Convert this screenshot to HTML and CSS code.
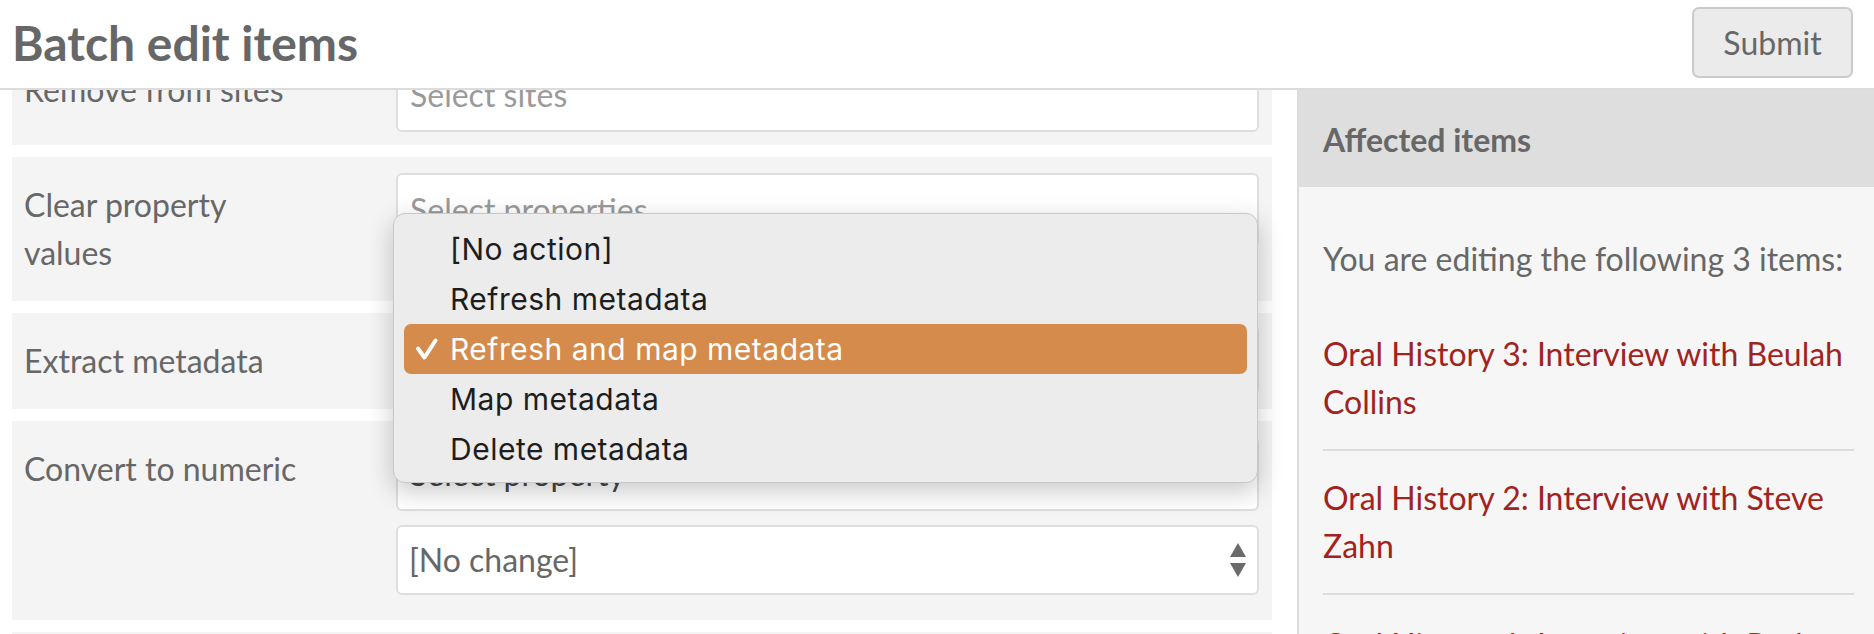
FILE: index.html
```html
<!DOCTYPE html>
<html lang="en">
<head>
<meta charset="utf-8">
<title>Batch edit items</title>
<link rel="stylesheet" href="styles.css">
</head>
<body>
<div class="page">
  <header class="page-header">
    <h1 class="page-title">Batch edit items</h1>
    <button class="btn-submit" type="button">Submit</button>
  </header>
  <div class="layout">
    <main class="main">
      <form class="batch-form">
        <div class="field">
          <div class="field-label">Remove from sites</div>
          <div class="field-inputs">
            <div class="chosen"><span class="placeholder">Select sites</span></div>
          </div>
        </div>
        <div class="field">
          <div class="field-label">Clear property values</div>
          <div class="field-inputs">
            <div class="chosen"><span class="placeholder">Select properties</span></div>
          </div>
        </div>
        <div class="field">
          <div class="field-label">Extract metadata</div>
          <div class="field-inputs">
            <div class="select">
              <span class="select-value">Refresh and map metadata</span>
              <svg class="select-arrows" viewBox="0 0 16 34" width="16" height="34" aria-hidden="true"><polygon points="8,0 16,14 0,14"/><polygon points="0,20 16,20 8,34"/></svg>
            </div>
          </div>
          <ul class="popup-menu">
            <li class="menu-item"><span class="menu-check"></span><span>[No action]</span></li>
            <li class="menu-item"><span class="menu-check"></span><span>Refresh metadata</span></li>
            <li class="menu-item is-selected"><span class="menu-check"><svg viewBox="0 0 23 22" width="23" height="22" aria-hidden="true"><path d="M3 10.5 L9.5 19.5 L20.5 2.5"/></svg></span><span>Refresh and map metadata</span></li>
            <li class="menu-item"><span class="menu-check"></span><span>Map metadata</span></li>
            <li class="menu-item"><span class="menu-check"></span><span>Delete metadata</span></li>
          </ul>
        </div>
        <div class="field">
          <div class="field-label">Convert to numeric</div>
          <div class="field-inputs">
            <div class="chosen"><span class="chosen-value">Select property</span></div>
            <div class="select">
              <span class="select-value">[No change]</span>
              <svg class="select-arrows" viewBox="0 0 16 34" width="16" height="34" aria-hidden="true"><polygon points="8,0 16,14 0,14"/><polygon points="0,20 16,20 8,34"/></svg>
            </div>
          </div>
        </div>
        <div class="field">
          <div class="field-label">Clear language</div>
          <div class="field-inputs">
            <div class="chosen"><span class="placeholder">Select properties</span></div>
          </div>
        </div>
      </form>
    </main>
    <aside class="sidebar">
      <h3 class="sidebar-title">Affected items</h3>
      <div class="sidebar-body">
        <p class="sidebar-intro">You are editing the following 3 items:</p>
        <ul class="item-list">
          <li><a href="#">Oral History 3: Interview with Beulah Collins</a></li>
          <li><a href="#">Oral History 2: Interview with Steve Zahn</a></li>
          <li><a href="#">Oral History 1: Interview with Ruth Lee</a></li>
        </ul>
      </div>
    </aside>
  </div>
</div>
</body>
</html>
```

FILE: styles.css
```css
* { box-sizing: border-box; }

html, body {
  margin: 0;
  padding: 0;
}

body {
  width: 1874px;
  height: 634px;
  overflow: hidden;
  background: #fff;
  color: #676767;
  font-family: Lato, "Open Sans", sans-serif;
  font-size: 32px;
  line-height: 48px;
}

.page {
  display: flex;
  flex-direction: column;
  height: 634px;
}

/* Header */
.page-header {
  flex: none;
  display: flex;
  justify-content: space-between;
  align-items: flex-start;
  height: 90px;
  padding: 0 21px 0 12px;
  background: #fff;
  border-bottom: 2px solid #dcdcdc;
}

.page-title {
  margin: 19px 0 0;
  font-size: 48px;
  line-height: 48px;
  font-weight: 700;
  color: #676767;
}

.btn-submit {
  margin-top: 7px;
  width: 161px;
  height: 71px;
  padding: 0;
  border: 2px solid #cacaca;
  border-radius: 7px;
  background: #ebebeb;
  color: #676767;
  font-family: Lato, "Open Sans", sans-serif;
  font-size: 32px;
  line-height: 48px;
}

/* Layout */
.layout {
  flex: 1;
  min-height: 0;
  display: grid;
  grid-template-columns: 1fr 577px;
}

.main {
  overflow: hidden;
  padding: 0 25px 0 12px;
}

.batch-form {
  margin-top: -48px;
  display: flex;
  flex-direction: column;
  gap: 12px;
}

.field {
  position: relative;
  display: grid;
  grid-template-columns: 280px 1fr;
  column-gap: 92px;
  align-items: start;
  padding: 12px 13px 12px 12px;
  background: #f4f4f4;
}

.field-label {
  padding: 12px 0;
}

.field-inputs {
  display: flex;
  flex-direction: column;
}

.chosen {
  margin: 4px 0 1px;
  height: 74px;
  padding: 11px 12px;
  background: #fff;
  border: 2px solid #dedede;
  border-radius: 6px;
  white-space: nowrap;
}

.placeholder { color: #9a9a9a; }
.chosen-value { color: #444; }

.select {
  display: flex;
  align-items: center;
  justify-content: space-between;
  height: 70px;
  padding: 0 11px;
  background: #fff;
  border: 2px solid #dedede;
  border-radius: 6px;
}

.chosen + .select {
  margin: 13px 0 13px;
}

.select-value { color: #676767; }

.select-arrows {
  flex: none;
  fill: #6b6b6b;
}

/* Native popup menu */
.popup-menu {
  position: absolute;
  left: 381px;
  top: -100px;
  z-index: 2;
  width: 865px;
  height: 270px;
  margin: 0;
  padding: 10px 0 0;
  list-style: none;
  background: #ececec;
  border: 1px solid #c8c8c8;
  border-radius: 12px;
  box-shadow: 0 8px 26px rgba(0, 0, 0, 0.22);
  font-family: Inter, "Liberation Sans", sans-serif;
  font-size: 30px;
  letter-spacing: 0.5px;
  color: #1d1d1d;
}

.menu-item {
  display: flex;
  align-items: center;
  height: 50px;
  line-height: 50px;
  margin: 0 10px;
  border-radius: 7px;
}

.menu-check {
  flex: none;
  display: flex;
  align-items: center;
  width: 46px;
  padding-left: 11px;
}

.menu-check svg path {
  fill: none;
  stroke: #fff;
  stroke-width: 4;
  stroke-linecap: round;
  stroke-linejoin: round;
}

.menu-item.is-selected {
  background: #d48b4b;
  color: #fff;
}

/* Sidebar */
.sidebar {
  background: #f6f6f6;
  border-left: 2px solid #dcdcdc;
  overflow: hidden;
}

.sidebar-title {
  margin: 0;
  padding: 26px 24px 23px;
  background: #dedede;
  font-size: 32px;
  line-height: 48px;
  font-weight: 700;
  color: #676767;
}

.sidebar-body {
  padding: 24px 20px 0 24px;
}

.sidebar-intro {
  margin: 24px 0;
}

.item-list {
  margin: 0;
  padding: 0;
  list-style: none;
}

.item-list li {
  padding: 23px 0;
  border-bottom: 2px solid #dcdcdc;
}

.item-list li:last-child {
  padding-top: 26px;
}

.item-list a {
  color: #a1231e;
  text-decoration: none;
}
```
